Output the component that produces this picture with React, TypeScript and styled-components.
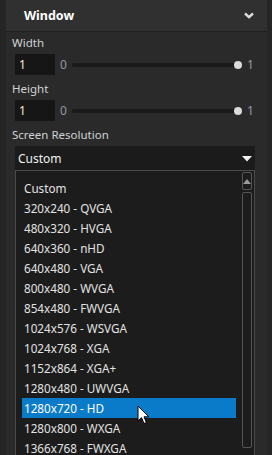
import React from "react";
import styled, { createGlobalStyle } from "styled-components";

const GlobalStyle = createGlobalStyle`
  html, body {
    margin: 0;
    padding: 0;
    background: #262626;
  }
  body {
    font-family: "Noto Sans", "Open Sans", sans-serif;
    font-size: 12px;
  }
`;

const RESOLUTIONS = [
  "Custom",
  "320x240 - QVGA",
  "480x320 - HVGA",
  "640x360 - nHD",
  "640x480 - VGA",
  "800x480 - WVGA",
  "854x480 - FWVGA",
  "1024x576 - WSVGA",
  "1024x768 - XGA",
  "1152x864 - XGA+",
  "1280x480 - UWVGA",
  "1280x720 - HD",
  "1280x800 - WXGA",
  "1366x768 - FWXGA",
];

function Slider() {
  return (
    <SliderRow>
      <NumberBox>1</NumberBox>
      <Bound>0</Bound>
      <Track>
        <Thumb />
      </Track>
      <Bound $end>1</Bound>
    </SliderRow>
  );
}

export default function App() {
  const selected = "1280x720 - HD";
  return (
    <>
      <GlobalStyle />
      <Page>
        <Panel>
          <Header>
            <Title>Window</Title>
            <svg width="10" height="7" viewBox="0 0 10 7">
              <polyline
                points="1,1.5 5,5.2 9,1.5"
                fill="none"
                stroke="#dcdcdc"
                strokeWidth="2.4"
              />
            </svg>
          </Header>
          <Body>
            <Label>Width</Label>
            <Slider />
            <Label $top={6}>Height</Label>
            <Slider />
            <Label $top={6}>Screen Resolution</Label>
            <Select>
              <span>Custom</span>
              <svg width="10" height="6" viewBox="0 0 10 6">
                <polygon points="0,0 10,0 5,5.5" fill="#f2f2f2" />
              </svg>
            </Select>
            <List>
              <Items>
                {RESOLUTIONS.map((r) => (
                  <Item key={r} $active={r === selected}>
                    {r}
                  </Item>
                ))}
              </Items>
              <Scrollbar>
                <ScrollButton>
                  <svg width="8" height="5" viewBox="0 0 8 5">
                    <polygon points="0,5 8,5 4,0" fill="#9a9a9a" />
                  </svg>
                </ScrollButton>
                <ScrollTrack />
              </Scrollbar>
              <Cursor width="13" height="20" viewBox="0 0 13 20">
                <path
                  d="M1 1 L1 16 L4.5 12.6 L7 18.5 L9.4 17.5 L7 11.8 L11.8 11.8 Z"
                  fill="#ffffff"
                  stroke="#000000"
                  strokeWidth="1"
                  strokeLinejoin="round"
                />
              </Cursor>
            </List>
          </Body>
        </Panel>
      </Page>
    </>
  );
}

const Page = styled.div`
  width: 272px;
  height: 455px;
  overflow: hidden;
  padding: 0 5px 0 6px;
  box-sizing: border-box;
  background: #252525;
`;

const Panel = styled.div`
  height: 100%;
  background: #2a2a2a;
`;

const Header = styled.div`
  height: 31px;
  display: flex;
  align-items: center;
  justify-content: space-between;
  padding: 0 13px 0 18px;
  background: #303030;
  border-bottom: 1px solid #1e1e1e;
`;

const Title = styled.div`
  color: #ffffff;
  font-weight: 700;
  font-size: 12.5px;
`;

const Body = styled.div`
  padding: 0 0 0 6px;
`;

const Label = styled.div<{ $top?: number }>`
  margin-top: ${(p) => p.$top ?? 3}px;
  height: 16px;
  line-height: 16px;
  color: #cfd3d6;
  font-size: 11.5px;
`;

const SliderRow = styled.div`
  margin: 3px 0 0 3px;
  height: 21px;
  display: flex;
  align-items: center;
`;

const NumberBox = styled.div`
  width: 40px;
  height: 21px;
  line-height: 21px;
  box-sizing: border-box;
  padding-left: 4px;
  background: #161616;
  color: #f3ead2;
  font-size: 12px;
`;

const Bound = styled.div<{ $end?: boolean }>`
  width: 8px;
  margin: ${(p) => (p.$end ? "0 0 0 9px" : "0 4px 0 5px")};
  color: #8f9aa4;
  font-size: 12px;
`;

const Track = styled.div`
  position: relative;
  width: 166px;
  height: 4px;
  border-radius: 2px;
  background: #1a1a1a;
`;

const Thumb = styled.div`
  position: absolute;
  right: -4px;
  top: -2px;
  width: 8px;
  height: 8px;
  border-radius: 50%;
  background: #dadada;
`;

const Select = styled.div`
  margin: 3px 0 0 3px;
  width: 240px;
  height: 24px;
  box-sizing: border-box;
  display: flex;
  align-items: center;
  justify-content: space-between;
  padding: 1px 3px 0 3px;
  background: #1b1b1b;
  color: #f0f0f0;
  font-size: 12px;
`;

const List = styled.div`
  position: relative;
  margin-left: 3px;
  width: 240px;
  height: 300px;
  box-sizing: border-box;
  display: flex;
  border: 1px solid #4a4a4a;
  background: #1c1c1c;
`;

const Items = styled.div`
  width: 214px;
  padding: 7px 0 0 6px;
`;

const Item = styled.div<{ $active?: boolean }>`
  height: 20px;
  line-height: 21px;
  padding-left: 2px;
  font-size: 11.7px;
  color: ${(p) => (p.$active ? "#ffffff" : "#e2e2e2")};
  background: ${(p) => (p.$active ? "#0a7bc9" : "transparent")};
  white-space: nowrap;
`;

const Scrollbar = styled.div`
  margin: 1px 0 0 6px;
  width: 10px;
  display: flex;
  flex-direction: column;
  gap: 2px;
`;

const ScrollButton = styled.div`
  height: 18px;
  box-sizing: border-box;
  border: 1px solid #555555;
  border-radius: 2px;
  display: flex;
  align-items: center;
  justify-content: center;
`;

const ScrollTrack = styled.div`
  height: 256px;
  box-sizing: border-box;
  border: 1px solid #555555;
  border-radius: 2px;
`;

const Cursor = styled.svg`
  position: absolute;
  left: 121px;
  top: 234px;
`;
